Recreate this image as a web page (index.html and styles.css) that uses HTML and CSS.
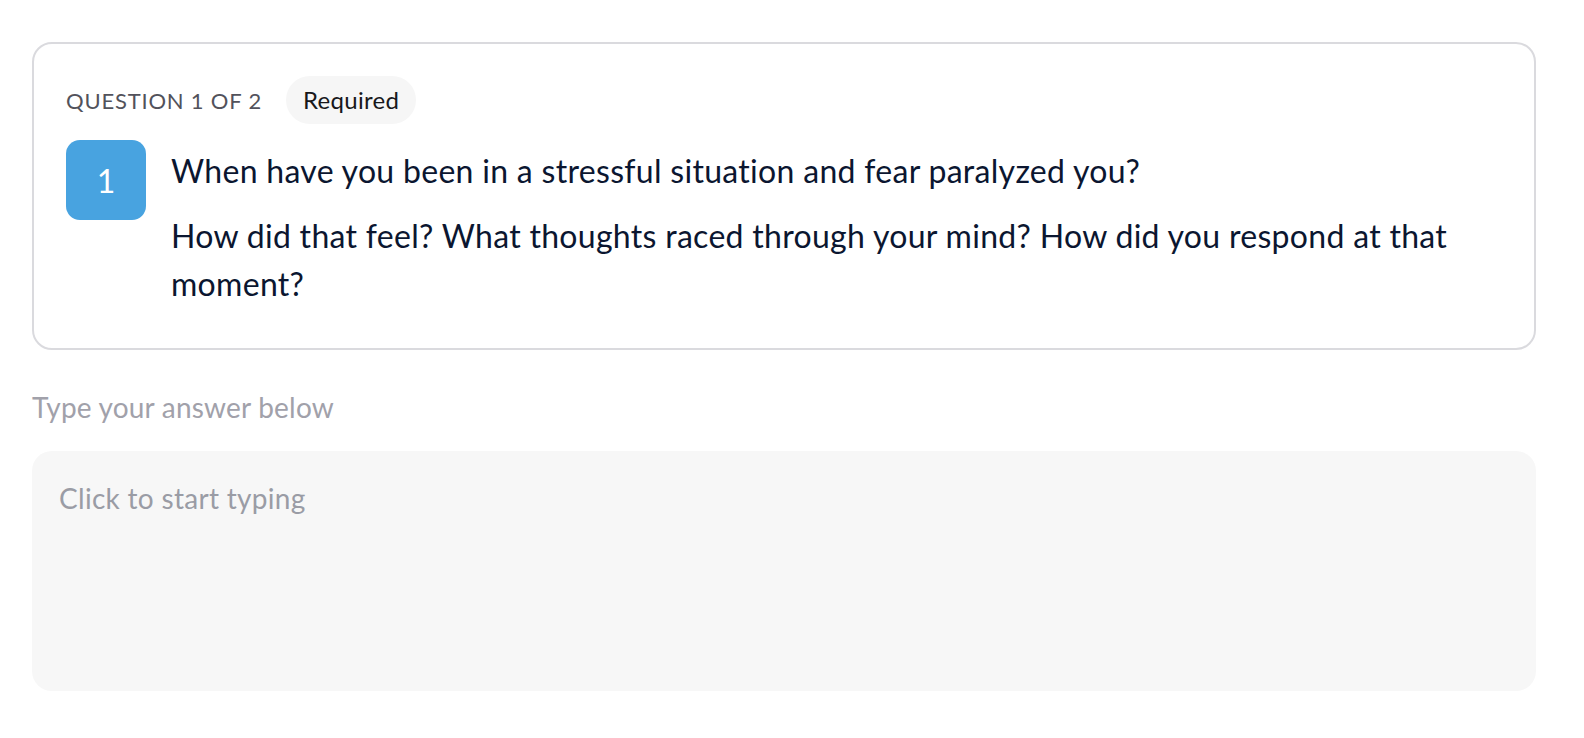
FILE: index.html
```html
<!DOCTYPE html>
<html lang="en">
<head>
    <meta charset="UTF-8">
    <meta name="viewport" content="width=device-width, initial-scale=1.0">
    <title>Question 1 of 2</title>
    <link rel="stylesheet" href="styles.css">
</head>
<body>
    <div class="page">
        <div class="question-card">
            <div class="question-meta">
                <span class="question-count">QUESTION 1 OF 2</span>
                <span class="badge">Required</span>
            </div>
            <div class="question-body">
                <div class="question-number">1</div>
                <div class="question-text">
                    <p class="question-title">When have you been in a stressful situation and fear paralyzed you?</p>
                    <p class="question-hint">How did that feel? What thoughts raced through your mind? How did you respond at that moment?</p>
                </div>
            </div>
        </div>
        <label class="answer-label" for="answer">Type your answer below</label>
        <textarea id="answer" class="answer-box" placeholder="Click to start typing"></textarea>
    </div>
</body>
</html>
```

FILE: styles.css
```css
body {
    margin: 0;
    background: #ffffff;
    font-family: 'Lato', 'Noto Sans', sans-serif;
    font-variant-ligatures: none;
    color: #0b1630;
}
.page {
    padding: 42px 48px 0 32px;
    display: flex;
    flex-direction: column;
}
.question-card {
    border: 2px solid #dadade;
    border-radius: 20px;
    padding: 32px;
}
.question-meta {
    display: flex;
    align-items: center;
    gap: 24px;
    height: 48px;
}
.question-count {
    font-size: 22px;
    letter-spacing: 0.8px;
    color: #52525b;
}
.badge {
    height: 48px;
    line-height: 48px;
    padding: 0 17px;
    border-radius: 24px;
    background: #f6f6f6;
    font-size: 24px;
    letter-spacing: 0.3px;
    color: #18181b;
}
.question-body {
    display: flex;
    gap: 25px;
    margin-top: 16px;
}
.question-number {
    flex: none;
    width: 80px;
    height: 80px;
    border-radius: 14px;
    background: #48a3e0;
    color: #ffffff;
    font-size: 32px;
    display: flex;
    align-items: center;
    justify-content: center;
}
.question-text {
    padding: 7px 0 8px;
    display: flex;
    flex-direction: column;
    gap: 17px;
}
.question-text p {
    margin: 0;
    font-size: 32px;
    line-height: 48px;
    letter-spacing: 0.3px;
}
.answer-label {
    margin: 36px 0 23px;
    font-size: 28px;
    line-height: 42px;
    letter-spacing: 0.2px;
    color: #a1a1aa;
}
.answer-box {
    height: 240px;
    box-sizing: border-box;
    padding: 26px 27px;
    border: none;
    border-radius: 20px;
    background: #f7f7f7;
    font-family: inherit;
    font-size: 28px;
    line-height: 42px;
    letter-spacing: 0.3px;
    color: #0b1630;
    resize: none;
    outline: none;
}
.answer-box::placeholder {
    color: #9a9ca5;
}
```
